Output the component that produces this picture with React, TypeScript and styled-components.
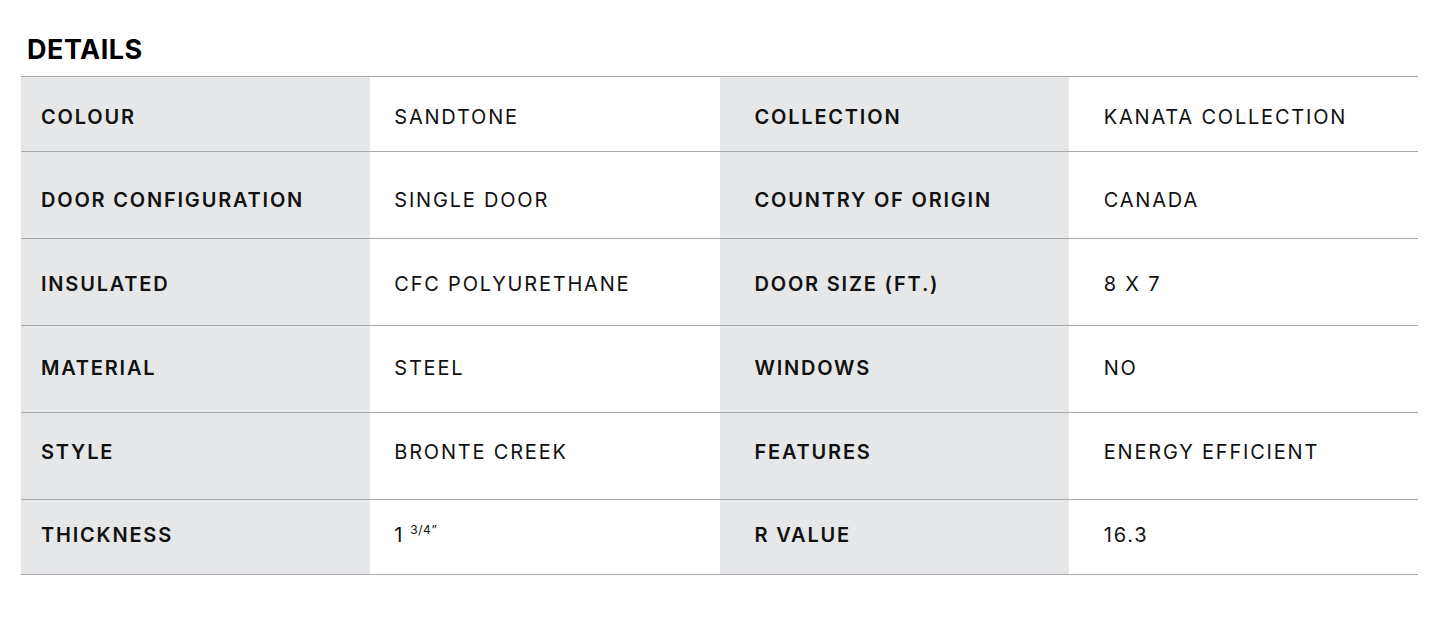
import React from "react";
import styled, { createGlobalStyle } from "styled-components";

const Global = createGlobalStyle`
  html, body { margin: 0; padding: 0; background: #ffffff; }
  body { font-family: "Inter", "Liberation Sans", sans-serif; color: #111111; }
`;

const Page = styled.div`
  padding: 36px 27px 40px 21px;
`;

const Title = styled.h2`
  margin: 0 0 12px 6px;
  font-size: 27px;
  font-weight: 700;
  letter-spacing: 0.5px;
  line-height: 28px;
  color: #000;
`;

const Table = styled.div`
  border-top: 1px solid #a7a9ac;
`;

const Row = styled.div`
  display: grid;
  grid-template-columns: repeat(4, 1fr);
  height: 87px;
  border-bottom: 1px solid #a7a9ac;
  box-sizing: border-box;
  &:first-child, &:last-child { height: 75px; }
`;

const Cell = styled.div<{ $label?: boolean; $pad: number; $top: number }>`
  display: flex;
  align-items: flex-start;
  padding-left: ${(p) => p.$pad}px;
  padding-top: ${(p) => p.$top}px;
  background: ${(p) => (p.$label ? "#e6e7e8" : "#ffffff")};
  font-size: 20px;
  line-height: 24px;
  font-weight: ${(p) => (p.$label ? 600 : 400)};
  letter-spacing: 1.8px;
  color: #111;
  white-space: nowrap;
`;

const Sup = styled.sup`
  font-size: 12px;
  line-height: 12px;
  margin-left: 6px;
  margin-top: 1px;
  letter-spacing: 0.6px;
`;

type Item = { top: number; cells: [string, React.ReactNode, string, React.ReactNode] };

const rows: Item[] = [
  { top: 28, cells: ["COLOUR", "SANDTONE", "COLLECTION", "KANATA COLLECTION"] },
  { top: 36, cells: ["DOOR CONFIGURATION", "SINGLE DOOR", "COUNTRY OF ORIGIN", "CANADA"] },
  { top: 33, cells: ["INSULATED", "CFC POLYURETHANE", "DOOR SIZE (FT.)", "8 X 7"] },
  { top: 30, cells: ["MATERIAL", "STEEL", "WINDOWS", "NO"] },
  { top: 27, cells: ["STYLE", "BRONTE CREEK", "FEATURES", "ENERGY EFFICIENT"] },
  {
    top: 23,
    cells: [
      "THICKNESS",
      <>
        1<Sup>3/4”</Sup>
      </>,
      "R VALUE",
      "16.3",
    ],
  },
];

export default function App() {
  return (
    <>
      <Global />
      <Page>
        <Title>DETAILS</Title>
        <Table>
          {rows.map((r, i) => (
            <Row key={i}>
              <Cell $label $pad={20} $top={r.top}>{r.cells[0]}</Cell>
              <Cell $pad={24} $top={r.top}>{r.cells[1]}</Cell>
              <Cell $label $pad={35} $top={r.top}>{r.cells[2]}</Cell>
              <Cell $pad={35} $top={r.top}>{r.cells[3]}</Cell>
            </Row>
          ))}
        </Table>
      </Page>
    </>
  );
}
